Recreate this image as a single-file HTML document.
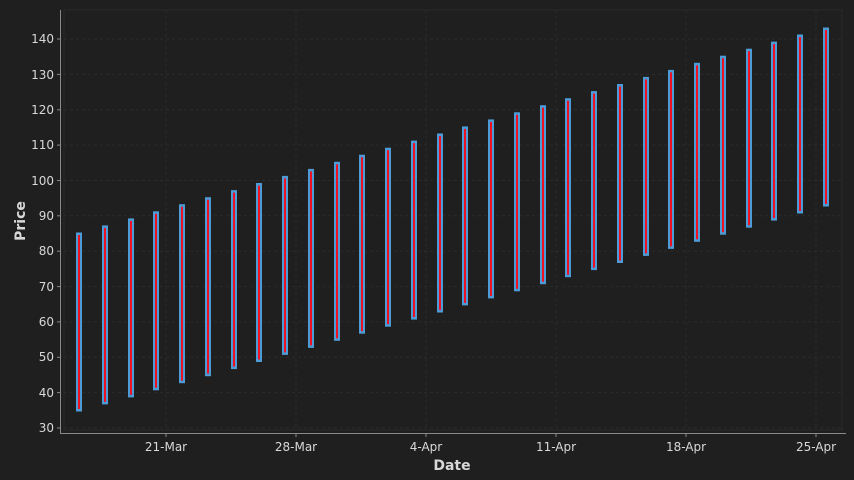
<!DOCTYPE html>
<html><head><meta charset="utf-8"><style>
html,body{margin:0;padding:0;background:#1f1f1f;}
svg{display:block;}
text{font-family:"DejaVu Sans","Liberation Sans",sans-serif;fill:#d8d8d8;}
</style></head><body>
<svg width="854" height="480" viewBox="0 0 854 480" xmlns="http://www.w3.org/2000/svg">
<defs>
<g id="b"><rect x="-3" y="-1" width="6" height="179" fill="#4c9bd6"/><rect x="-1" y="1.5" width="2" height="174" fill="#ee1122"/></g>
</defs>
<rect x="64" y="10" width="778" height="420" fill="none" stroke="#2a2a2a" stroke-width="1"/>
<g stroke="#2b2b2b" stroke-width="1" stroke-dasharray="3,3">
<line x1="64" x2="842" y1="428" y2="428"/><line x1="64" x2="842" y1="392.6" y2="392.6"/><line x1="64" x2="842" y1="357.3" y2="357.3"/><line x1="64" x2="842" y1="321.9" y2="321.9"/><line x1="64" x2="842" y1="286.6" y2="286.6"/><line x1="64" x2="842" y1="251.2" y2="251.2"/><line x1="64" x2="842" y1="215.8" y2="215.8"/><line x1="64" x2="842" y1="180.5" y2="180.5"/><line x1="64" x2="842" y1="145.1" y2="145.1"/><line x1="64" x2="842" y1="109.8" y2="109.8"/><line x1="64" x2="842" y1="74.4" y2="74.4"/><line x1="64" x2="842" y1="39" y2="39"/>
<line y1="10" y2="430" x1="166" x2="166"/><line y1="10" y2="430" x1="296" x2="296"/><line y1="10" y2="430" x1="426" x2="426"/><line y1="10" y2="430" x1="556" x2="556"/><line y1="10" y2="430" x1="686" x2="686"/><line y1="10" y2="430" x1="816" x2="816"/>
</g>
<g stroke="#8a8a8a" stroke-width="1">
<line x1="60.5" x2="60.5" y1="10" y2="434"/>
<line x1="60" x2="846" y1="433.5" y2="433.5"/>
<line x1="57" x2="60" y1="428" y2="428"/><line x1="57" x2="60" y1="392.6" y2="392.6"/><line x1="57" x2="60" y1="357.3" y2="357.3"/><line x1="57" x2="60" y1="321.9" y2="321.9"/><line x1="57" x2="60" y1="286.6" y2="286.6"/><line x1="57" x2="60" y1="251.2" y2="251.2"/><line x1="57" x2="60" y1="215.8" y2="215.8"/><line x1="57" x2="60" y1="180.5" y2="180.5"/><line x1="57" x2="60" y1="145.1" y2="145.1"/><line x1="57" x2="60" y1="109.8" y2="109.8"/><line x1="57" x2="60" y1="74.4" y2="74.4"/><line x1="57" x2="60" y1="39" y2="39"/>
<line x1="166" x2="166" y1="434" y2="437"/><line x1="296" x2="296" y1="434" y2="437"/><line x1="426" x2="426" y1="434" y2="437"/><line x1="556" x2="556" y1="434" y2="437"/><line x1="686" x2="686" y1="434" y2="437"/><line x1="816" x2="816" y1="434" y2="437"/>
</g>
<g font-size="12" text-anchor="end">
<text x="54" y="432">30</text><text x="54" y="397">40</text><text x="54" y="361">50</text><text x="54" y="326">60</text><text x="54" y="291">70</text><text x="54" y="255">80</text><text x="54" y="220">90</text><text x="54" y="185">100</text><text x="54" y="149">110</text><text x="54" y="114">120</text><text x="54" y="79">130</text><text x="54" y="43">140</text>
</g>
<g font-size="12" text-anchor="middle">
<text x="166" y="451">21-Mar</text><text x="296" y="451">28-Mar</text><text x="426" y="451">4-Apr</text><text x="556" y="451">11-Apr</text><text x="686" y="451">18-Apr</text><text x="816" y="451">25-Apr</text>
</g>
<text x="452" y="470" font-size="14" text-anchor="middle" font-weight="bold">Date</text>
<text transform="translate(25,221) rotate(-90)" font-size="14" text-anchor="middle" font-weight="bold">Price</text>
<use href="#b" x="79" y="233.5"/><use href="#b" x="105" y="226.4"/><use href="#b" x="131" y="219.4"/><use href="#b" x="156" y="212.3"/><use href="#b" x="182" y="205.2"/><use href="#b" x="208" y="198.2"/><use href="#b" x="234" y="191.1"/><use href="#b" x="259" y="184"/><use href="#b" x="285" y="176.9"/><use href="#b" x="311" y="169.9"/><use href="#b" x="337" y="162.8"/><use href="#b" x="362" y="155.7"/><use href="#b" x="388" y="148.7"/><use href="#b" x="414" y="141.6"/><use href="#b" x="440" y="134.5"/><use href="#b" x="465" y="127.4"/><use href="#b" x="491" y="120.4"/><use href="#b" x="517" y="113.3"/><use href="#b" x="543" y="106.2"/><use href="#b" x="568" y="99.2"/><use href="#b" x="594" y="92.1"/><use href="#b" x="620" y="85"/><use href="#b" x="646" y="77.9"/><use href="#b" x="671" y="70.9"/><use href="#b" x="697" y="63.8"/><use href="#b" x="723" y="56.7"/><use href="#b" x="749" y="49.7"/><use href="#b" x="774" y="42.6"/><use href="#b" x="800" y="35.5"/><use href="#b" x="826" y="28.5"/>
</svg>
</body></html>
